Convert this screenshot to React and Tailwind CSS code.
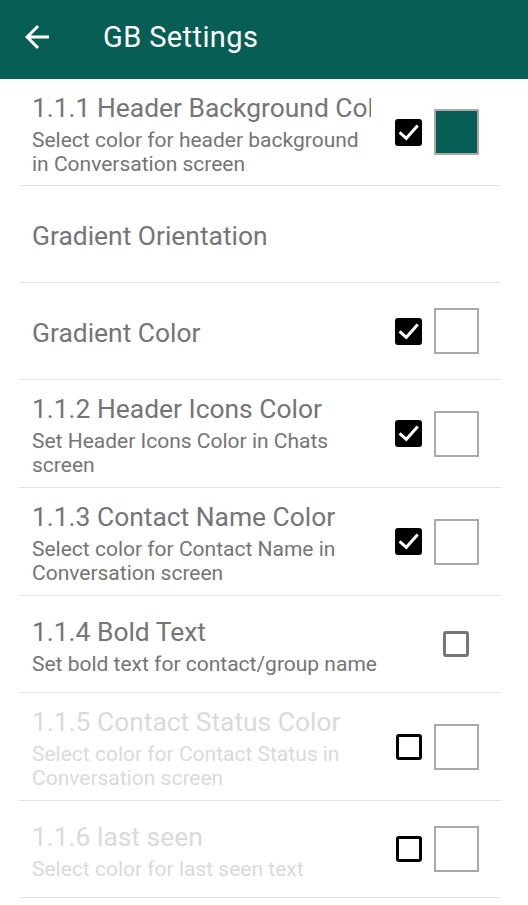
import React from "react";

const font = { fontFamily: "Roboto, 'Noto Sans', sans-serif" };

function CheckBox({ state }) {
  if (state === "checked") {
    return (
      <div className="w-[27px] h-[27px] rounded-[3px] bg-black flex items-center justify-center shrink-0">
        <svg width="27" height="27" viewBox="0 0 27 27">
          <path d="M5.7 14.3 L11.3 19.3 L21.7 7.7" fill="none" stroke="white" strokeWidth="3" strokeLinecap="square" />
        </svg>
      </div>
    );
  }
  if (state === "gray") {
    return <div className="w-[26px] h-[26px] rounded-[3px] border-[3px] border-[#777777] shrink-0" />;
  }
  return <div className="w-[26px] h-[26px] rounded-[3px] border-[3px] border-black shrink-0" />;
}

function Swatch({ color }) {
  return <div className="w-[45px] h-[46px] border-2 border-[#a9a9a9] shrink-0" style={{ backgroundColor: color }} />;
}

function Row({ title, lines = [], widget = null, disabled = false, extra = "" }) {
  const tc = disabled ? "text-[#dadada]" : "text-[#757575]";
  return (
    <div className={`flex items-center min-h-[97px] border-b border-[#e3e3e3] pl-[13px] ${extra}`}>
      <div className="flex-1 min-w-0 pt-[14px] pb-[10px]">
        <div className={`text-[26.4px] leading-[30px] whitespace-nowrap overflow-hidden ${tc}`}>{title}</div>
        {lines.length > 0 && (
          <div className={`mt-[5px] text-[21px] leading-[24px] ${tc}`}>
            {lines.map((l, i) => (
              <div key={i} className="whitespace-nowrap">{l}</div>
            ))}
          </div>
        )}
      </div>
      {widget}
    </div>
  );
}

function ColorWidget({ check, color }) {
  return (
    <div className="flex items-center gap-[12px] ml-[24px] mr-[22px]">
      <CheckBox state={check} />
      <Swatch color={color} />
    </div>
  );
}

export default function App() {
  return (
    <div className="w-[528px] h-[905px] bg-white overflow-hidden" style={font}>
      <div className="h-[79px] bg-[#075e54] flex items-start">
        <svg className="ml-[19px] mt-[19px]" width="36" height="36" viewBox="0 0 24 24">
          <path d="M20 11H7.83l5.59-5.59L12 4l-8 8 8 8 1.41-1.41L7.83 13H20v-2z" fill="white" />
        </svg>
        <div className="ml-[48px] mt-[21px] text-[29px] leading-[32px] tracking-[0.4px] text-white">GB Settings</div>
      </div>
      <div className="ml-[19px] w-[482px]">
        <Row
          extra="!min-h-[106px] [&>div:first-child]:pb-[9px]"
          title="1.1.1 Header Background Color"
          lines={["Select color for header background", "in Conversation screen"]}
          widget={<ColorWidget check="checked" color="#075e54" />}
        />
        <Row title="Gradient Orientation" widget={<div className="w-[129px] shrink-0" />} />
        <Row title="Gradient Color" widget={<ColorWidget check="checked" color="#ffffff" />} />
        <Row
          title="1.1.2 Header Icons Color"
          lines={["Set Header Icons Color in Chats", "screen"]}
          widget={<ColorWidget check="checked" color="#ffffff" />}
        />
        <Row
          title="1.1.3 Contact Name Color"
          lines={["Select color for Contact Name in", "Conversation screen"]}
          widget={<ColorWidget check="checked" color="#ffffff" />}
        />
        <Row
          title="1.1.4 Bold Text"
          lines={["Set bold text for contact/group name"]}
          widget={
            <div className="ml-[8px] mr-[32px]">
              <CheckBox state="gray" />
            </div>
          }
        />
        <Row
          disabled
          title="1.1.5 Contact Status Color"
          lines={["Select color for Contact Status in", "Conversation screen"]}
          widget={<ColorWidget check="empty" color="#ffffff" />}
        />
        <Row
          disabled
          title="1.1.6 last seen"
          lines={["Select color for last seen text"]}
          widget={<ColorWidget check="empty" color="#ffffff" />}
        />
      </div>
    </div>
  );
}
